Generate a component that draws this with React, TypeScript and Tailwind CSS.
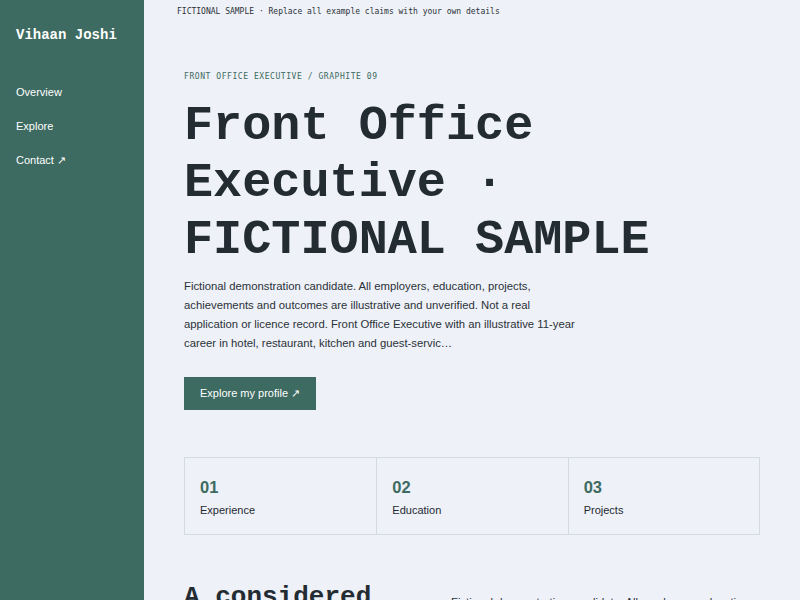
import React from "react";

const nav = ["Overview", "Explore", "Contact ↗"];

const stats = [
    { num: "01", label: "Experience" },
    { num: "02", label: "Education" },
    { num: "03", label: "Projects" },
];

export default function App() {
    return (
        <div className="flex min-h-screen bg-[#eef1f7] font-['Liberation_Sans',Arial,sans-serif] text-[#1f2a33]">
            <aside className="w-[144px] shrink-0 bg-[#3d6b61] px-4 pt-[27px] text-white">
                <div className="font-['Liberation_Mono',monospace] text-[14px] font-bold leading-[17px]">
                    Vihaan Joshi
                </div>
                <nav className="mt-[41px] flex flex-col gap-[19px]">
                    {nav.map((item) => (
                        <a key={item} className="text-[11px] leading-[15px]">
                            {item}
                        </a>
                    ))}
                </nav>
            </aside>

            <main className="flex-1 overflow-hidden">
                <div className="px-[33px] pt-[6px] font-['DejaVu_Sans_Mono',monospace] text-[8px] leading-[12px] text-[#2b3239]">
                    FICTIONAL SAMPLE · Replace all example claims with your own details
                </div>

                <section className="px-10 pt-[53px]">
                    <div className="font-['DejaVu_Sans_Mono',monospace] text-[8px] leading-[12px] tracking-[0.07em] text-[#3d6b61]">
                        FRONT OFFICE EXECUTIVE / GRAPHITE 09
                    </div>
                    <h1 className="mt-[15px] font-['Liberation_Mono',monospace] text-[48.5px] font-bold leading-[57px] text-[#232b33]">
                        Front Office Executive · FICTIONAL SAMPLE
                    </h1>
                    <p className="mt-[8px] max-w-[400px] text-[11.3px] leading-[19px] text-[#2b3239]">
                        Fictional demonstration candidate. All employers, education, projects,
                        achievements and outcomes are illustrative and unverified. Not a real
                        application or licence record. Front Office Executive with an illustrative
                        11-year career in hotel, restaurant, kitchen and guest-servic…
                    </p>
                    <button className="mt-[24px] h-[33px] bg-[#3d6b61] px-4 text-[11px] text-white">
                        Explore my profile ↗
                    </button>

                    <div className="mt-[47px] grid grid-cols-3 border border-[#d5d9e0]">
                        {stats.map((s, i) => (
                            <div
                                key={s.num}
                                className={`px-[15px] pt-[19px] pb-[16px] ${i > 0 ? "border-l border-[#d5d9e0]" : ""}`}
                            >
                                <div className="text-[16.5px] font-bold leading-[20px] text-[#3d6b61]">{s.num}</div>
                                <div className="mt-[5px] text-[11px] leading-[16px]">{s.label}</div>
                            </div>
                        ))}
                    </div>

                    <div className="mt-[46px] grid grid-cols-[243px_1fr] gap-6">
                        <h2 className="font-['Liberation_Mono',monospace] text-[26px] font-bold leading-[32px] text-[#232b33]">
                            A considered approach
                        </h2>
                        <p className="pt-[12px] text-[11.3px] leading-[19px] text-[#2b3239]">
                            Fictional demonstration candidate. All employers, education and outcomes are illustrative.
                        </p>
                    </div>
                </section>
            </main>
        </div>
    );
}
